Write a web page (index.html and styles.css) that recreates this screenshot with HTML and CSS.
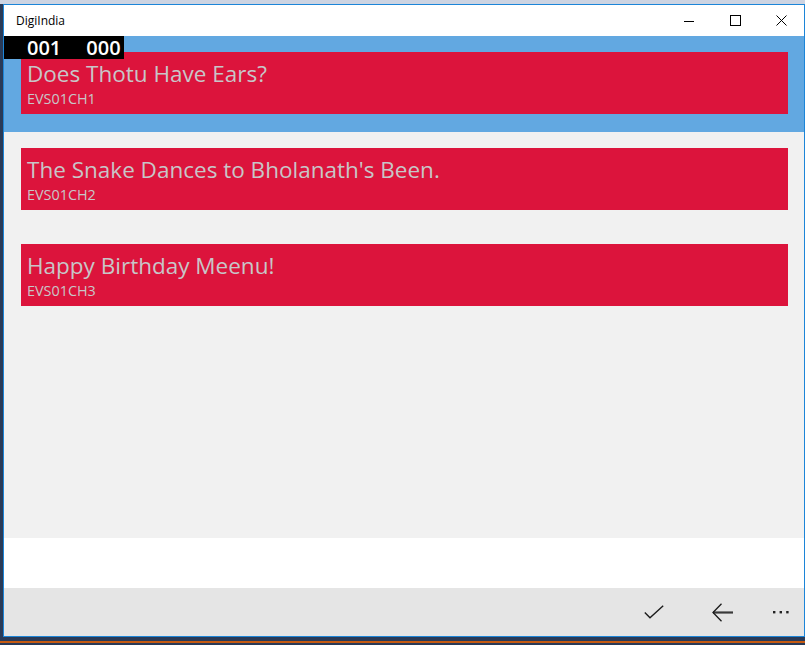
FILE: index.html
```html
<!DOCTYPE html>
<html lang="en">
<head>
<meta charset="utf-8">
<title>DigiIndia</title>
<link rel="stylesheet" href="styles.css">
</head>
<body>
<div class="desktop">
  <div class="vs-toolbar"></div>
  <div class="window">
    <div class="titlebar">
      <span class="app-title">DigiIndia</span>
      <div class="caption-buttons">
        <span class="cap-btn"><svg width="10" height="10" viewBox="0 0 10 10"><path d="M0 5.5H10" stroke="#000" stroke-width="1"/></svg></span>
        <span class="cap-btn"><svg width="11" height="11" viewBox="0 0 11 11"><rect x="0.5" y="0.5" width="10" height="10" fill="none" stroke="#000" stroke-width="1"/></svg></span>
        <span class="cap-btn"><svg width="11" height="11" viewBox="0 0 11 11"><path d="M0.5 0.5L10.5 10.5M10.5 0.5L0.5 10.5" stroke="#000" stroke-width="1"/></svg></span>
      </div>
    </div>
    <div class="content">
      <ul class="chapter-list">
        <li class="chapter selected">
          <div class="card">
            <div class="card-title">Does Thotu Have Ears?</div>
            <div class="card-code">EVS01CH1</div>
          </div>
        </li>
        <li class="chapter">
          <div class="card">
            <div class="card-title">The Snake Dances to Bholanath's Been.</div>
            <div class="card-code">EVS01CH2</div>
          </div>
        </li>
        <li class="chapter">
          <div class="card">
            <div class="card-title">Happy Birthday Meenu!</div>
            <div class="card-code">EVS01CH3</div>
          </div>
        </li>
      </ul>
      <div class="counter"><span>001</span><span>000</span></div>
    </div>
    <div class="spacer"></div>
    <div class="commandbar">
      <span class="cmd-btn"><svg width="20" height="14" viewBox="0 0 20 14"><path d="M0.8 7.6L6 12.8L19.2 0.8" fill="none" stroke="#1b1b1b" stroke-width="1.4"/></svg></span>
      <span class="cmd-btn"><svg width="21" height="19" viewBox="0 0 21 19"><path d="M1 9.5H21" stroke="#3a3a3a" stroke-width="2.2"/><path d="M9.5 0.8L1 9.5L9.5 18.2" fill="none" stroke="#1b1b1b" stroke-width="1.3"/></svg></span>
      <span class="cmd-btn more"><svg width="16" height="4" viewBox="0 0 16 4"><rect x="0" y="1" width="2.4" height="2.4" fill="#222"/><rect x="6.6" y="1" width="2.4" height="2.4" fill="#222"/><rect x="13.2" y="1" width="2.4" height="2.4" fill="#222"/></svg></span>
    </div>
  </div>
  <div class="taskbar-line"></div>
</div>
</body>
</html>
```
FILE: styles.css
```css
* { box-sizing: border-box; }
html, body { margin: 0; padding: 0; }
body {
  width: 805px;
  height: 645px;
  overflow: hidden;
  font-family: "Open Sans", "Noto Sans", sans-serif;
}
.desktop {
  width: 805px;
  height: 645px;
  background: #293a57;
  display: flex;
  flex-direction: column;
}
.vs-toolbar {
  height: 4px;
  background: #cdd4e2;
  flex: none;
}
.window {
  margin-left: 3px;
  width: 802px;
  height: 633px;
  border: 1px solid #1c85d8;
  display: flex;
  flex-direction: column;
  background: #f1f1f1;
  flex: none;
}
.titlebar {
  height: 31px;
  background: #fff;
  display: flex;
  align-items: center;
  justify-content: space-between;
  flex: none;
}
.app-title {
  font-size: 12px;
  color: #000;
  margin-left: 12px;
  margin-top: -1px;
}
.caption-buttons { display: flex; height: 100%; }
.cap-btn {
  width: 46px;
  height: 100%;
  display: flex;
  align-items: center;
  justify-content: center;
}
.cap-btn svg { display: block; }
.content {
  position: relative;
  height: 502px;
  flex: none;
}
.chapter-list {
  list-style: none;
  margin: 0;
  padding: 0;
}
.chapter {
  height: 96px;
  padding: 16px 16px 0 17px;
}
.chapter.selected { background: #62a8e1; }
.card {
  height: 62px;
  background: #dc143c;
  padding: 8px 6px 0 6px;
  color: #c8c6c8;
}
.card-title {
  font-size: 22.5px;
  line-height: 27px;
  white-space: nowrap;
}
.card-code {
  font-size: 14.4px;
  line-height: 23px;
}
.counter {
  position: absolute;
  left: 0;
  top: 0;
  width: 120px;
  height: 23px;
  background: #000;
  color: #fff;
  font-weight: 600;
  font-size: 20px;
  line-height: 20px;
  display: flex;
  align-items: flex-start;
  gap: 25px;
  padding: 2px 0 0 23px;
}
.spacer {
  height: 50px;
  background: #fff;
  flex: none;
}
.commandbar {
  height: 48px;
  background: #e5e5e5;
  display: flex;
  justify-content: flex-end;
  flex: none;
}
.cmd-btn {
  width: 68px;
  height: 100%;
  display: flex;
  align-items: center;
  justify-content: center;
}
.cmd-btn.more { width: 48px; padding-left: 2px; }
.cmd-btn svg { display: block; }
.taskbar-line {
  height: 6px;
  background: #293a57;
  border-bottom: 2px solid #c55a11;
  flex: none;
}
```
